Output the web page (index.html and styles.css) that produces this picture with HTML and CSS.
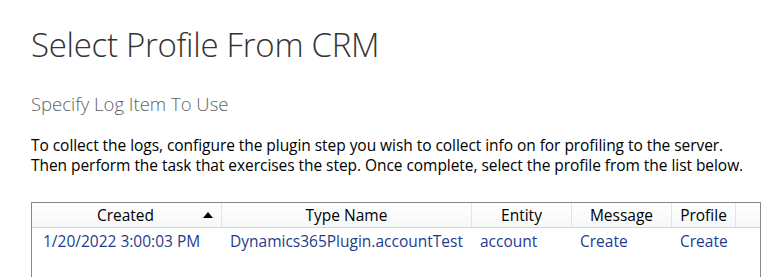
FILE: index.html
```html
<!DOCTYPE html>
<html>
<head>
<meta charset="utf-8">
<link rel="stylesheet" href="styles.css">
</head>
<body>
<div class="page">
  <h1 class="title">Select Profile From CRM</h1>
  <h2 class="subtitle">Specify Log Item To Use</h2>
  <p class="desc">To collect the logs, configure the plugin step you wish to collect info on for profiling to the server.<br>Then perform the task that exercises the step. Once complete, select the profile from the list below.</p>
  <div class="list">
    <div class="head">
      <div class="hcell c-created"><span>Created</span><span class="sort"></span></div>
      <div class="hcell c-type">Type Name</div>
      <div class="hcell c-entity">Entity</div>
      <div class="hcell c-msg">Message</div>
      <div class="hcell c-profile">Profile</div>
      <div class="hcell c-fill"></div>
    </div>
    <div class="row">
      <div class="cell c-created first">1/20/2022 3:00:03 PM</div>
      <div class="cell c-type">Dynamics365Plugin.accountTest</div>
      <div class="cell c-entity">account</div>
      <div class="cell c-msg">Create</div>
      <div class="cell c-profile">Create</div>
      <div class="cell c-fill"></div>
    </div>
  </div>
</div>
</body>
</html>
```
FILE: styles.css
```css
html, body {
  margin: 0;
  padding: 0;
  background: #ffffff;
  overflow: hidden;
}
.page {
  padding: 23px 0 0 31px;
  font-family: "Open Sans", "Noto Sans", sans-serif;
}
.title {
  margin: 0;
  font-weight: 300;
  font-size: 33px;
  line-height: 44px;
  color: #333333;
  letter-spacing: -0.3px;
}
.subtitle {
  margin: 26px 0 0 0;
  font-weight: 300;
  font-size: 18.5px;
  line-height: 22px;
  color: #5f5f5f;
}
.desc {
  margin: 20px 0 0 0;
  font-size: 15.5px;
  line-height: 20px;
  color: #000000;
  letter-spacing: -0.05px;
}
.list {
  margin-top: 27px;
  width: 728px;
  height: 80px;
  border: 1px solid #828790;
  border-bottom: none;
  font-size: 15.5px;
}
.head, .row {
  display: grid;
  grid-template-columns: 190px 250px 100px 100px 64px 1fr;
}
.head {
  height: 24px;
  border-bottom: 1px solid #d5d5d5;
  background: linear-gradient(#ffffff, #f6f7f8);
}
.hcell {
  display: flex;
  align-items: center;
  justify-content: center;
  border-right: 1px solid #e3e4e6;
  color: #000;
  position: relative;
}
.c-fill { border-right: none; }
.c-created span:first-child { margin-left: -2px; }
.sort {
  position: absolute;
  right: 8px;
  top: 9px;
  width: 0;
  height: 0;
  border-left: 5px solid transparent;
  border-right: 5px solid transparent;
  border-bottom: 6px solid #000;
}
.row {
  height: 26px;
  color: #1f3b8f;
}
.cell {
  display: flex;
  align-items: center;
  padding-left: 8px;
  white-space: nowrap;
}
.cell.first { padding-left: 11px; }
```
